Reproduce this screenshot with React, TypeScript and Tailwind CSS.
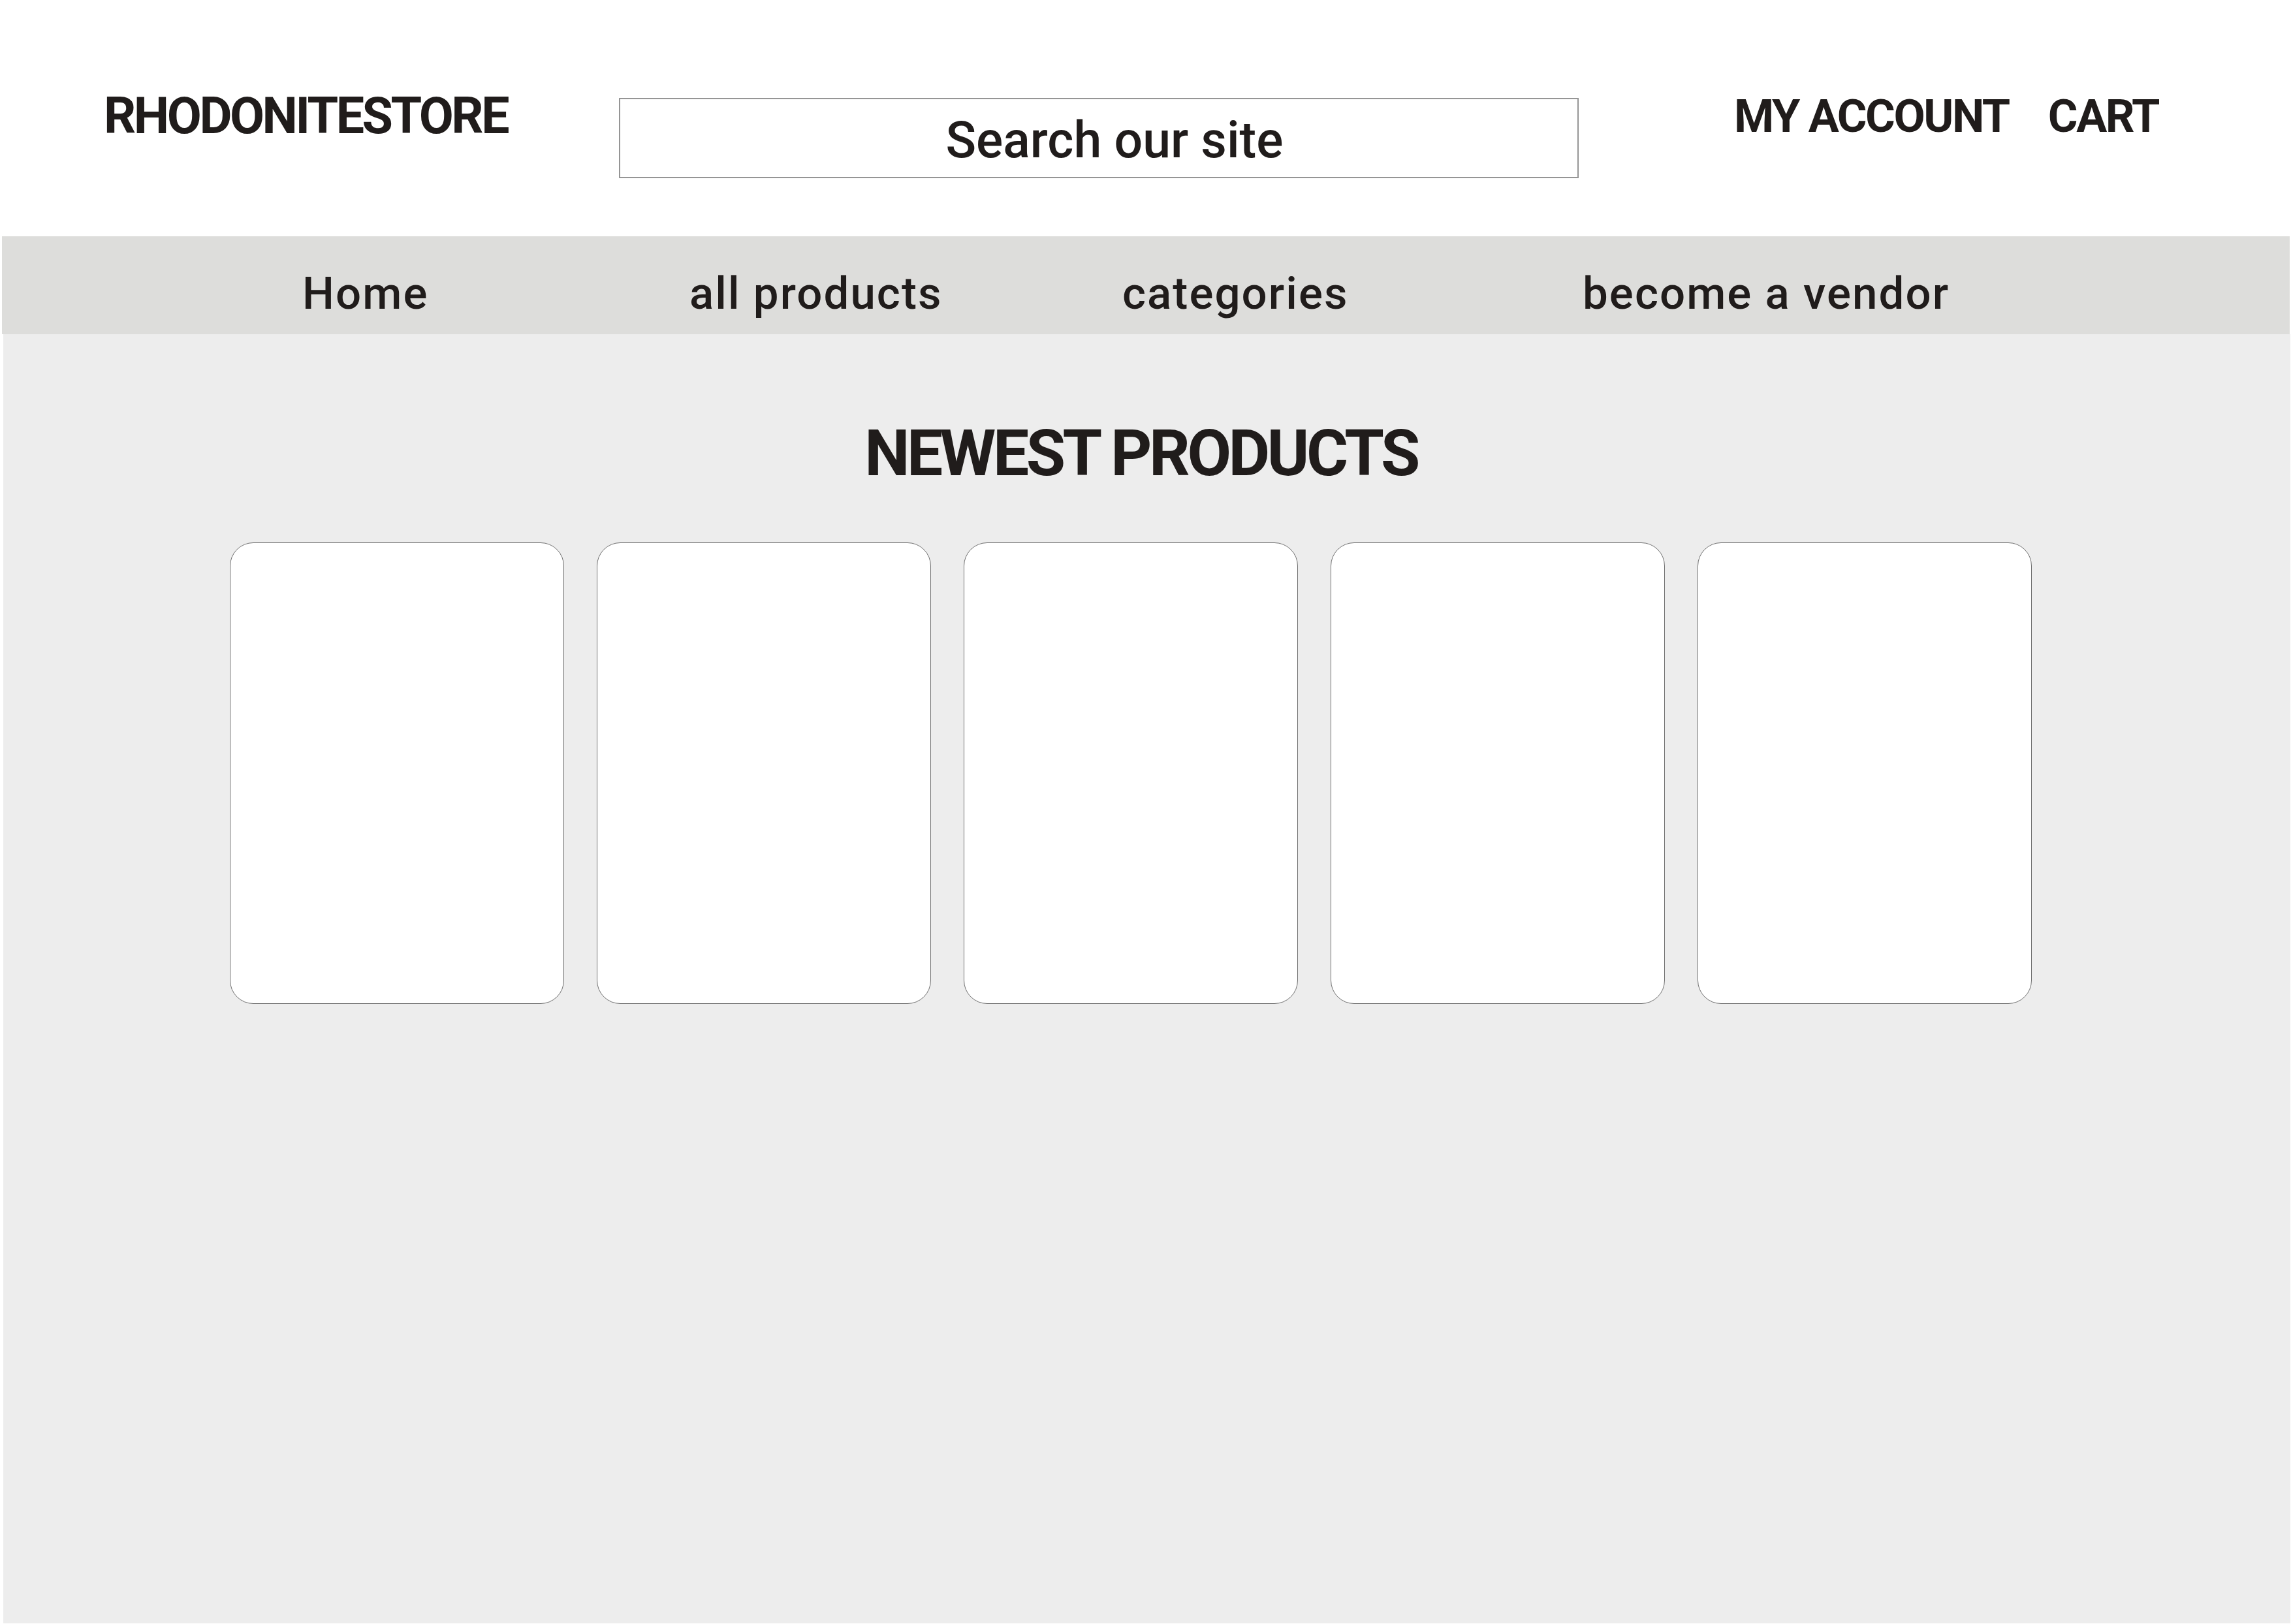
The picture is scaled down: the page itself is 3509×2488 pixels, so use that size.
const navItems = [
  { label: "Home", className: "w-[593px]" },
  { label: "all products", className: "w-[663px]" },
  { label: "categories", className: "w-[705px]" },
  { label: "become a vendor", className: "" },
];

export default function App() {
  return (
    <div className="flex h-[2488px] w-[3509px] flex-col bg-white font-['Roboto','Liberation_Sans',sans-serif] text-[#201c1b]">
      {/* Header */}
      <header className="flex h-[362px] items-start pt-[140px]">
        <div className="ml-[159px] w-[789px]">
          <p className="text-[77px] leading-none font-bold tracking-[-0.045em]">RHODONITESTORE</p>
        </div>
        <div className="mt-[10px] flex h-[123px] w-[1470px] items-center justify-center border-2 border-[#959595] pt-2 pl-[48px]">
          <span className="text-[77px] leading-none font-medium">Search our site</span>
        </div>
        <div className="mt-[3px] ml-[238px] flex gap-[60px] text-[70px] leading-none font-bold tracking-[-0.035em]">
          <span>MY ACCOUNT</span>
          <span>CART</span>
        </div>
      </header>

      {/* Navigation */}
      <nav className="ml-[3px] mr-[2px] flex h-[150px] items-start bg-[#dddddb] pt-[53px] pl-[460px]">
        {navItems.map((item) => (
          <div key={item.label} className={item.className}>
            <span className="text-[69px] leading-none font-medium tracking-[0.03em]">{item.label}</span>
          </div>
        ))}
      </nav>

      {/* Main */}
      <main className="mb-[1px] ml-[5px] mr-[1px] flex-1 bg-[#ededed]">
        <h1 className="mt-[134px] pr-[18px] text-center text-[98px] leading-none font-bold tracking-[-0.045em]">
          NEWEST PRODUCTS
        </h1>
        <div className="mt-[87px] ml-[347px] flex gap-[50px]">
          {[1, 2, 3, 4, 5].map((n) => (
            <div key={n} className="h-[707px] w-[512px] rounded-[36px] border border-[#6f6f6f] bg-white" />
          ))}
        </div>
      </main>
    </div>
  );
}
